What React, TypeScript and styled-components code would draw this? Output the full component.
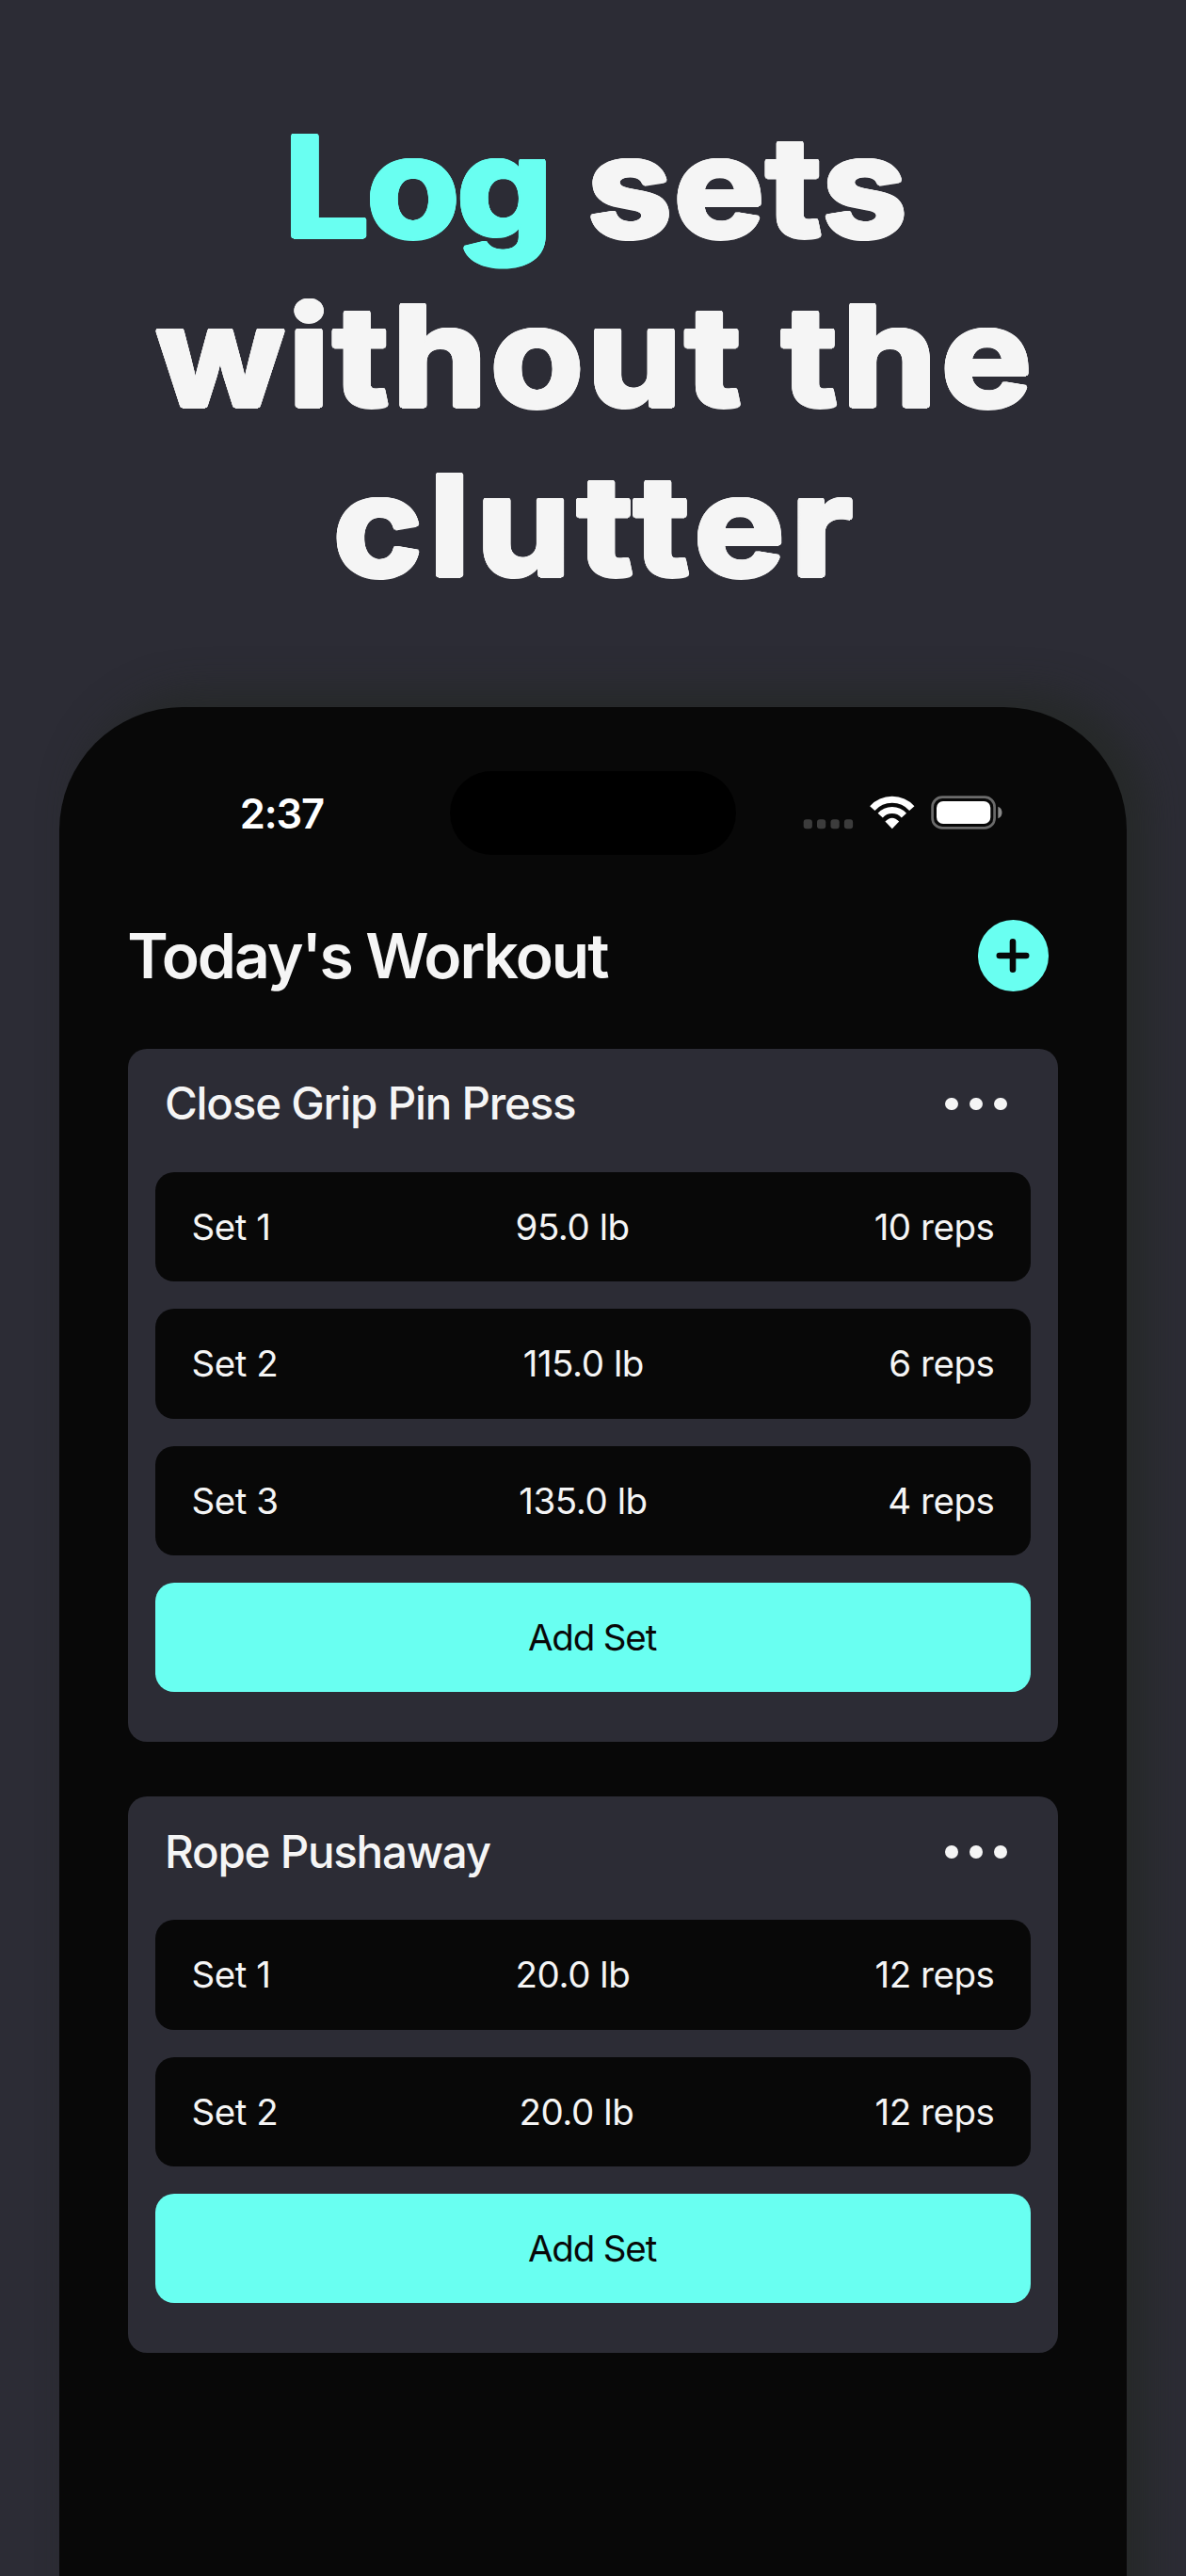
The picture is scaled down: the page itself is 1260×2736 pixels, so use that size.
import React from 'react';
import styled, { createGlobalStyle } from 'styled-components';

const colors = {
  backdrop: '#2c2c35',
  screen: '#080808',
  card: '#2c2c35',
  accent: '#69fff1',
  text: '#f5f5f5',
};

const GlobalStyle = createGlobalStyle`
  * { box-sizing: border-box; }
  html, body { margin: 0; padding: 0; background: ${colors.backdrop}; }
  body { font-family: Inter, "Liberation Sans", sans-serif; }
  button { font: inherit; border: 0; padding: 0; cursor: pointer; }
`;

const Page = styled.main`
  width: 1260px;
  height: 2736px;
  overflow: hidden;
  background: ${colors.backdrop};
`;

const Headline = styled.h1`
  margin: 0;
  height: 751px;
  padding: 108px 0 0 6px;
  color: ${colors.text};
  font-size: 146.6px;
  font-weight: 700;
  line-height: 180px;
  transform: scaleX(1.1);
`;

const HeadlineRow = styled.span`
  display: flex;
  justify-content: center;
  gap: 36px;
`;

/* Hard offsets in a ring thicken the strokes and round off their corners. */
const Word = styled.span<{ $spacing: number; $accent?: boolean }>`
  --c: ${(p) => (p.$accent ? colors.accent : colors.text)};
  color: var(--c);
  letter-spacing: ${(p) => p.$spacing}px;
  text-shadow:
    2.5px 0 var(--c), 2.31px 0.96px var(--c), 1.77px 1.77px var(--c), 0.96px 2.31px var(--c),
    0 2.5px var(--c), -0.96px 2.31px var(--c), -1.77px 1.77px var(--c), -2.31px 0.96px var(--c),
    -2.5px 0 var(--c), -2.31px -0.96px var(--c), -1.77px -1.77px var(--c), -0.96px -2.31px var(--c),
    0 -2.5px var(--c), 0.96px -2.31px var(--c), 1.77px -1.77px var(--c), 2.31px -0.96px var(--c);
`;

const Phone = styled.section`
  width: 1134px;
  height: 2200px;
  margin: 0 auto;
  border-radius: 131px;
  background: ${colors.screen};
  box-shadow: 22px -16px 40px rgba(36, 40, 36, 0.75);
`;

const StatusBar = styled.header`
  display: flex;
  align-items: center;
  height: 225.8px;
  padding: 0 0 1px 191.7px;
`;

const Clock = styled.span`
  width: 223px;
  padding-top: 2px;
  color: #fff;
  font-size: 43.5px;
  font-weight: 600;
  line-height: 52px;
  letter-spacing: -1.1px;
`;

const Island = styled.div`
  width: 304px;
  height: 89px;
  border-radius: 45px;
  background: #000;
`;

const StatusIcons = styled.svg`
  display: block;
  width: 220px;
  height: 50px;
  margin-left: 68.3px;
`;

const TitleBar = styled.div`
  display: flex;
  align-items: center;
  justify-content: space-between;
  height: 76px;
  padding: 0 83px 0 72.3px;
`;

const Title = styled.h2`
  margin: 0;
  color: ${colors.text};
  font-size: 66px;
  font-weight: 600;
  line-height: 76px;
  letter-spacing: -2.05px;
`;

const AddButton = styled.button`
  display: flex;
  width: 75.5px;
  height: 75.5px;
  border-radius: 50%;
  background: ${colors.accent};
  align-items: center;
  justify-content: center;
`;

const Exercises = styled.div`
  display: flex;
  flex-direction: column;
  gap: 58px;
  padding: 61.2px 73px 0;
`;

const Card = styled.article`
  padding: 0 29px 53px;
  border-radius: 20px;
  background: ${colors.card};
`;

const CardHeader = styled.div`
  display: flex;
  align-items: center;
  justify-content: space-between;
  height: 117px;
  margin-bottom: 14px;
  padding: 0 25px 0 10px;
`;

const CardTitle = styled.h3`
  margin: 0;
  color: ${colors.text};
  font-size: 47.5px;
  font-weight: 500;
  line-height: 58px;
  letter-spacing: -1.22px;
`;

const MoreButton = styled.button`
  display: flex;
  gap: 12.4px;
  background: transparent;
`;

const Dot = styled.span`
  width: 13.8px;
  height: 13.8px;
  border-radius: 50%;
  background: ${colors.text};
`;

const SetList = styled.div`
  display: flex;
  flex-direction: column;
  gap: 28.9px;
`;

const SetRow = styled.div`
  display: flex;
  align-items: center;
  justify-content: space-between;
  height: 116.4px;
  padding: 0 38.5px;
  border-radius: 20px;
  background: ${colors.screen};
  color: ${colors.text};
  font-size: 38.5px;
  line-height: 46px;
  letter-spacing: -0.45px;
`;

const AddSetButton = styled.button`
  height: 116.4px;
  padding-right: 2px;
  border-radius: 20px;
  background: ${colors.accent};
  color: ${colors.screen};
  font-size: 38.5px;
  line-height: 46px;
  letter-spacing: -1.15px;
`;

interface WorkoutSet {
  weight: string;
  reps: number;
}

interface Exercise {
  name: string;
  sets: WorkoutSet[];
}

const exercises: Exercise[] = [
  {
    name: 'Close Grip Pin Press',
    sets: [
      { weight: '95.0', reps: 10 },
      { weight: '115.0', reps: 6 },
      { weight: '135.0', reps: 4 },
    ],
  },
  {
    name: 'Rope Pushaway',
    sets: [
      { weight: '20.0', reps: 12 },
      { weight: '20.0', reps: 12 },
    ],
  },
];

function SystemIcons() {
  return (
    <StatusIcons viewBox="850 838 220 50" aria-hidden="true">
      {[853.7, 868, 882.5, 896.9].map((x) => (
        <rect key={x} x={x} y="870.3" width="9.2" height="10" rx="3" fill="#3c3c3c" />
      ))}
      <g fill="none" stroke="#fff">
        <path d="M926.8 858.6A28.3 28.3 0 0 1 968.8 858.6" strokeWidth="7.2" />
        <path d="M935.2 866.2A16.9 16.9 0 0 1 960.4 866.2" strokeWidth="7" />
      </g>
      <path d="M947.8 880.2L940.4 872.6Q947.8 865 955.2 872.6Z" fill="#fff" />
      <rect x="990.6" y="846.7" width="66" height="32.7" rx="10.5" fill="none" stroke="#6b6b6b" strokeWidth="2.7" />
      <rect x="995" y="851" width="57.3" height="24" rx="7" fill="#fff" />
      <path d="M1060.3 856.7C1063 857.6 1064.5 860 1064.5 863S1063 868.4 1060.3 869.3Z" fill="#8a8a8a" />
    </StatusIcons>
  );
}

function ExerciseCard({ name, sets }: Exercise) {
  return (
    <Card>
      <CardHeader>
        <CardTitle>{name}</CardTitle>
        <MoreButton aria-label="More options">
          <Dot />
          <Dot />
          <Dot />
        </MoreButton>
      </CardHeader>
      <SetList>
        {sets.map((set, i) => (
          <SetRow key={i}>
            <span>Set {i + 1}</span>
            <span>{set.weight} lb</span>
            <span>{set.reps} reps</span>
          </SetRow>
        ))}
        <AddSetButton>Add Set</AddSetButton>
      </SetList>
    </Card>
  );
}

export default function App() {
  return (
    <Page>
      <GlobalStyle />
      <Headline>
        <HeadlineRow>
          <Word $spacing={-2.7} $accent>Log</Word>
          <Word $spacing={1.6}>sets</Word>
        </HeadlineRow>
        <HeadlineRow>
          <Word $spacing={3.4}>without</Word>
          <Word $spacing={4.5}>the</Word>
        </HeadlineRow>
        <HeadlineRow>
          <Word $spacing={6.1}>clutter</Word>
        </HeadlineRow>
      </Headline>
      <Phone>
        <StatusBar>
          <Clock>2:37</Clock>
          <Island />
          <SystemIcons />
        </StatusBar>
        <TitleBar>
          <Title>Today's Workout</Title>
          <AddButton aria-label="Add exercise">
            <svg width="40" height="40" viewBox="-20 -20 40 40">
              <path d="M-14.2 0H14.2M0 -14.7V14.7" stroke={colors.screen} strokeWidth="6.6" strokeLinecap="round" />
            </svg>
          </AddButton>
        </TitleBar>
        <Exercises>
          {exercises.map((exercise) => (
            <ExerciseCard key={exercise.name} {...exercise} />
          ))}
        </Exercises>
      </Phone>
    </Page>
  );
}
